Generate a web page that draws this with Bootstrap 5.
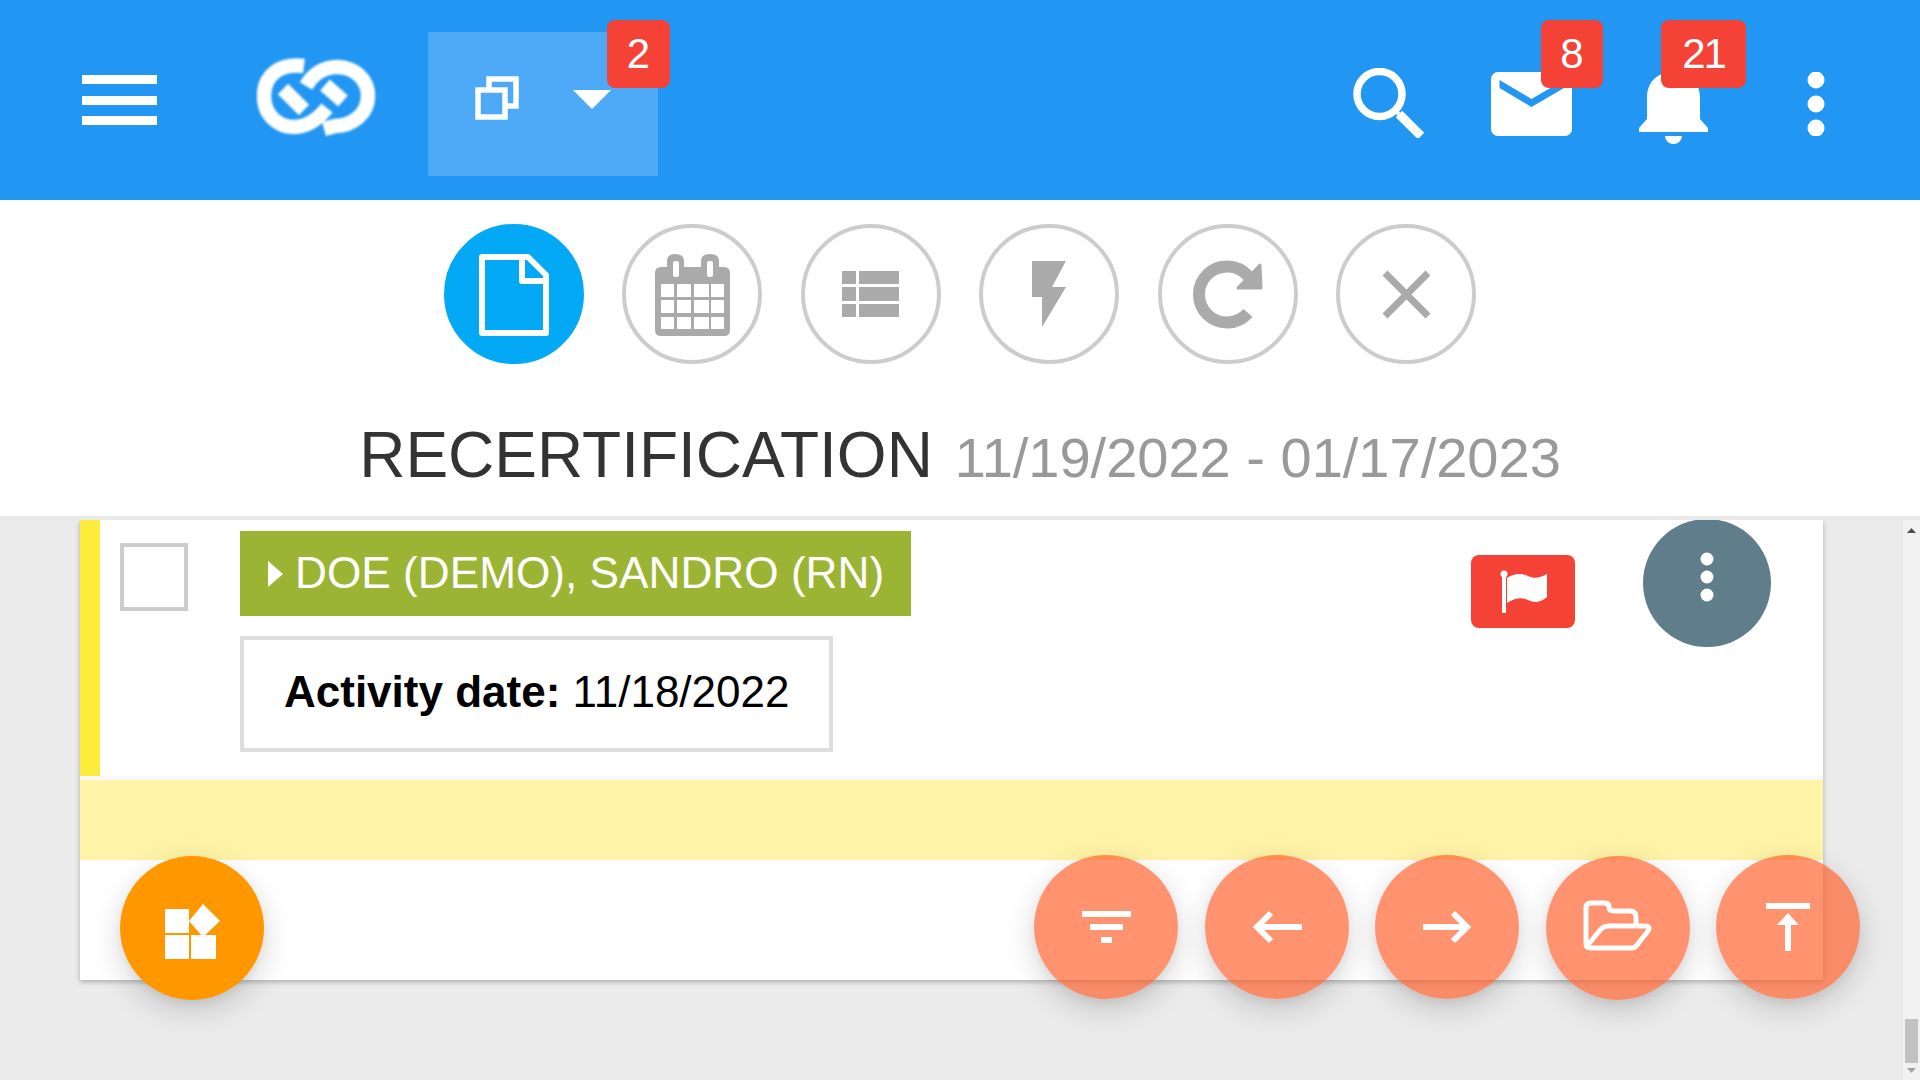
<!DOCTYPE html>
<html lang="en">
<head>
<meta charset="utf-8">
<title>Recertification</title>
<link href="https://cdn.jsdelivr.net/npm/bootstrap@5.3.0/dist/css/bootstrap.min.css" rel="stylesheet">
<style>
html,body{height:100%;}
body{font-family:"Liberation Sans",Arial,sans-serif;background:#ebebeb;overflow:hidden;}
svg{display:block;flex:none;}
.hdr{height:200px;background:#2196f3;padding:0 95px 0 82px;flex:none;}
.burger{width:75px;margin-top:75px;}
.burger span{display:block;height:9px;background:#fff;margin-bottom:11.5px;}
.logo-wrap{margin:58px 0 0 100px;width:119px;}
.logo-wrap svg{filter:blur(.9px);}
.switcher{margin:32px 0 0 52px;width:230px;height:144px;background:#4eaaf6;}
.hbadge{position:absolute;top:20px;height:68px;background:#f44336;color:#fff;font-size:42px;line-height:68px;text-align:center;border-radius:8px;}
.search-wrap{margin-top:68px;}
.mail-wrap{margin:72px 0 0 66px;}
.bell-wrap{margin:72px 0 0 67px;}
.dots-wrap{margin:72px 0 0 99px;}
.sw-badge{left:179px;top:-12px;width:63px;}
.mail-badge{left:50px;top:-52px;width:62px;}
.bell-badge{left:22px;top:-52px;width:85px;letter-spacing:-2px;}
.tools{background:#fff;height:316px;flex:none;padding-top:24px;}
.tool{width:140px;height:140px;border:4px solid #ccc;border-radius:50%;background:#fff;}
.tool-row{gap:38.4px;}
.tool.on{background:#03a9f4;border-color:#03a9f4;}
.rec-title{margin:36px 0 0;height:111px;line-height:111px;font-size:64px;font-weight:400;color:#333;white-space:nowrap;}
.rec-title small{font-size:56px;color:#999;margin-left:4px;}
.divider{height:4px;background:#e9e9e9;flex:none;}
.main-area{min-height:0;}
.scroller{overflow:hidden;padding:0 80px;background:#ebebeb;}
.sheet{background:#fff;box-shadow:0 2px 5px rgba(0,0,0,.26);height:460px;}
.row-top{height:256px;}
.strip{width:20px;background:#ffeb3b;}
.chk{width:68px;height:68px;border:4px solid #ccc;margin:23px 52px 0 20px;}
.who{margin-top:11px;height:85px;background:#9cb434;color:#fff;font-size:44.2px;padding:0 27px 0 28px;white-space:nowrap;}
.who svg{margin-right:12px;}
.act{margin-top:20px;height:116px;border:4px solid #ddd;color:#000;font-size:44px;padding:0 40px 4px;white-space:nowrap;}
.flagbtn{width:104px;height:73px;background:#f44336;border-radius:8px;margin:35px 68px 0 0;}
.morebtn{width:128px;height:128px;border-radius:50%;background:#607d8b;margin:-1px 52px 0 0;}
.band{height:4px;background:#f8f8f8;}
.yrow{height:80px;background:#fef3a6;}
.sbar{width:17px;background:#f1f1f1;flex:none;}
.sbar-thumb{width:13px;height:44px;background:#c1c1c1;margin:auto auto 0;}
.sbar-down{margin:5px 0 7px;}
.fab-rail{position:fixed;left:120px;right:60px;top:855px;gap:26.5px;}
.fab{width:144px;height:144px;border-radius:50%;box-shadow:0 10px 30px rgba(0,0,0,.17),0 4px 12px rgba(0,0,0,.05);flex:none;}
.fab-main{background:#ff9800;margin-top:1px;}
.fab-soft{background:rgba(255,87,34,.65);}
.fab-low{margin-top:1px;}
</style>
</head>
<body class="d-flex flex-column">
<header class="hdr d-flex align-items-start">
  <div class="burger"><span></span><span></span><span></span></div>
  <div class="logo-wrap">
    <svg width="119" height="80" viewBox="17 13 119 80" fill="none" stroke="#fff" stroke-width="14.5" stroke-linecap="butt">
      <path d="M64 21C40 18 24 30 24 51C24 70 38 82 54 82C68 82 78 74 87 63"/>
      <path d="M66 41C73 29 84 22 97 22C115 22 128 35 128 51C128 68 113 81 95 81L84 84"/>
      <path d="M43 44L64 65M85 40L103 56"/>
    </svg>
  </div>
  <div class="switcher position-relative">
    <svg class="position-absolute" style="left:47px;top:44px" width="44" height="44" viewBox="0 0 44 44">
      <rect x="14" y="3" width="27" height="27" fill="none" stroke="#fff" stroke-width="5.5"/>
      <rect x="3" y="14" width="27" height="27" fill="#4eaaf6" stroke="#fff" stroke-width="5.5"/>
    </svg>
    <svg class="position-absolute" style="left:144.5px;top:58px" width="38" height="19" viewBox="0 0 38 19"><polygon points="0,0 38,0 19,19" fill="#fff"/></svg>
    <span class="hbadge sw-badge">2</span>
  </div>
  <div class="search-wrap ms-auto">
    <svg width="72" height="70" viewBox="0 0 72 70" fill="none" stroke="#fff">
      <circle cx="26.5" cy="26" r="22.5" stroke-width="7.5"/>
      <path d="M41 42L46 46" stroke-width="4"/>
      <path d="M46 46L68 68" stroke-width="9"/>
    </svg>
  </div>
  <div class="mail-wrap position-relative">
    <svg width="81" height="64" viewBox="0 0 81 64">
      <rect width="81" height="64" rx="7" fill="#fff"/>
      <polygon points="8.5,8 40.5,27 73,8 73,16 40.5,35 8.5,16" fill="#2196f3"/>
    </svg>
    <span class="hbadge mail-badge">8</span>
  </div>
  <div class="bell-wrap position-relative">
    <svg width="69" height="72" viewBox="0 0 69 72" fill="#fff">
      <path d="M8 47V26C8 10 18 0 34.5 0C51 0 61 10 61 26V47L69 56V60H0V56Z"/>
      <path d="M26 64H43A8.5 8 0 0 1 26 64Z"/>
    </svg>
    <span class="hbadge bell-badge">21</span>
  </div>
  <div class="dots-wrap">
    <svg width="18" height="64" viewBox="0 0 18 64" fill="#fff"><circle cx="9" cy="8" r="8.5"/><circle cx="9" cy="32" r="8.5"/><circle cx="9" cy="56" r="8.5"/></svg>
  </div>
</header>

<section class="tools text-center">
  <div class="tool-row d-flex justify-content-center">
    <div class="tool on">
      <svg width="132" height="132" viewBox="4 4 132 132" fill="none" stroke="#fff" stroke-width="6" stroke-linejoin="round">
        <path d="M38 33H84L102 51V109H38Z"/><path d="M78 33V57H102"/>
      </svg>
    </div>
    <div class="tool">
      <svg width="132" height="132" viewBox="4 4 132 132">
        <path d="M39 43H45V37Q45 30 53 30Q62 30 62 37V43H79V37Q79 30 88 30Q97 30 97 37V43H102Q108 43 108 49V106Q108 112 102 112H39Q33 112 33 106V49Q33 43 39 43Z" fill="#aaa"/>
        <g fill="#fff">
          <rect x="51" y="37" width="6" height="16" rx="2"/><rect x="85" y="37" width="6" height="16" rx="2"/>
          <rect x="39" y="60" width="13" height="13"/><rect x="55" y="60" width="14" height="13"/><rect x="72" y="60" width="15" height="13"/><rect x="89" y="60" width="13" height="13"/>
          <rect x="39" y="76" width="13" height="13"/><rect x="55" y="76" width="14" height="13"/><rect x="72" y="76" width="15" height="13"/><rect x="89" y="76" width="13" height="13"/>
          <rect x="39" y="93" width="13" height="12"/><rect x="55" y="93" width="14" height="12"/><rect x="72" y="93" width="15" height="12"/><rect x="89" y="93" width="13" height="12"/>
        </g>
      </svg>
    </div>
    <div class="tool">
      <svg width="132" height="132" viewBox="4 4 132 132" fill="#aaa">
        <rect x="41" y="47" width="14" height="13"/><rect x="58" y="47" width="40" height="13"/>
        <rect x="41" y="63" width="14" height="14"/><rect x="58" y="63" width="40" height="14"/>
        <rect x="41" y="80" width="14" height="13"/><rect x="58" y="80" width="40" height="13"/>
      </svg>
    </div>
    <div class="tool">
      <svg width="132" height="132" viewBox="4 4 132 132"><polygon points="53,37 87,37 73,63 87,63 63,103 63,73 53,73" fill="#aaa"/></svg>
    </div>
    <div class="tool">
      <svg width="132" height="132" viewBox="4 4 132 132">
        <path d="M90 52A28 28 0 1 0 90 89" fill="none" stroke="#aaa" stroke-width="12"/>
        <polygon points="102,41 103,64 80,64" fill="#aaa" stroke="#aaa" stroke-width="3" stroke-linejoin="round"/>
      </svg>
    </div>
    <div class="tool">
      <svg width="132" height="132" viewBox="4 4 132 132" stroke="#aaa" stroke-width="7"><path d="M49 49L92 92M92 49L49 92"/></svg>
    </div>
  </div>
  <h1 class="rec-title">RECERTIFICATION <small>11/19/2022 - 01/17/2023</small></h1>
</section>
<div class="divider"></div>

<main class="main-area d-flex flex-grow-1">
  <div class="scroller flex-grow-1">
    <div class="sheet">
      <div class="row-top d-flex">
        <div class="strip"></div>
        <div class="chk"></div>
        <div>
          <div class="who d-flex align-items-center">
            <svg width="15" height="26" viewBox="0 0 15 26"><polygon points="0,0 15,13 0,26" fill="#fff"/></svg>
            <span>DOE (DEMO), SANDRO (RN)</span>
          </div>
          <div class="act d-inline-flex align-items-center"><span><b>Activity date:</b> 11/18/2022</span></div>
        </div>
        <div class="flagbtn ms-auto d-flex align-items-center justify-content-center">
          <svg width="47" height="43" viewBox="0 0 47 43" fill="#fff">
            <rect x="2" y="3" width="4" height="40"/><circle cx="4" cy="4" r="3.5"/>
            <path d="M7 8C14 3 22 3 28 6C34 9 40 8 47 4V27C40 33 34 33 28 30C22 27 14 28 7 33Z"/>
          </svg>
        </div>
        <div class="morebtn">
          <svg width="128" height="128" viewBox="0 0 128 128" fill="#fff"><circle cx="64" cy="40" r="6.5"/><circle cx="64" cy="58" r="6.5"/><circle cx="64" cy="76" r="6.5"/></svg>
        </div>
      </div>
      <div class="band"></div>
      <div class="yrow"></div>
    </div>
  </div>
  <aside class="sbar d-flex flex-column align-items-center">
    <svg class="mt-2" width="9" height="5" viewBox="0 0 9 5"><polygon points="4.5,0 9,5 0,5" fill="#505050"/></svg>
    <div class="sbar-thumb"></div>
    <svg class="sbar-down" width="9" height="5" viewBox="0 0 9 5"><polygon points="0,0 9,0 4.5,5" fill="#a3a3a3"/></svg>
  </aside>
</main>

<nav class="fab-rail d-flex">
  <div class="fab fab-main me-auto">
    <svg width="144" height="144" viewBox="0 0 144 144" fill="#fff">
      <rect x="45" y="53" width="24" height="24"/><rect x="45" y="79" width="24" height="24"/><rect x="71" y="79" width="25" height="24"/>
      <polygon points="83,48 100,65 83,81 69,65"/>
    </svg>
  </div>
  <div class="fab fab-soft">
    <svg width="144" height="144" viewBox="0 0 144 144" fill="#fff"><rect x="48" y="56" width="49" height="6"/><rect x="56" y="69" width="33" height="6"/><rect x="67" y="82" width="11" height="6"/></svg>
  </div>
  <div class="fab fab-soft">
    <svg width="144" height="144" viewBox="0 0 144 144" fill="none" stroke="#fff" stroke-width="6"><path d="M97 72H52M66 58L52 72L66 86"/></svg>
  </div>
  <div class="fab fab-soft">
    <svg width="144" height="144" viewBox="0 0 144 144" fill="none" stroke="#fff" stroke-width="6"><path d="M48 72H92M78 58L92 72L78 86"/></svg>
  </div>
  <div class="fab fab-soft fab-low">
    <svg width="144" height="144" viewBox="0 0 144 144" fill="none" stroke="#fff" stroke-width="5" stroke-linejoin="round">
      <g transform="translate(37 44)">
        <path d="M3 44V8Q3 3 8 3H21Q26 3 26 7Q26 11 31 11H47Q53 11 53 17V24"/>
        <path d="M3 44Q3 48 8 48H48Q52 48 54 45L65 31Q68 26 62 26H26Q21 26 18 29L4 46"/>
      </g>
    </svg>
  </div>
  <div class="fab fab-soft">
    <svg width="144" height="144" viewBox="0 0 144 144" fill="#fff"><rect x="50" y="48" width="44" height="6"/><polygon points="72,58 83,70 75,70 75,96 69,96 69,70 61,70"/></svg>
  </div>
</nav>
<script src="https://cdn.jsdelivr.net/npm/bootstrap@5.3.0/dist/js/bootstrap.bundle.min.js"></script>
</body>
</html>
